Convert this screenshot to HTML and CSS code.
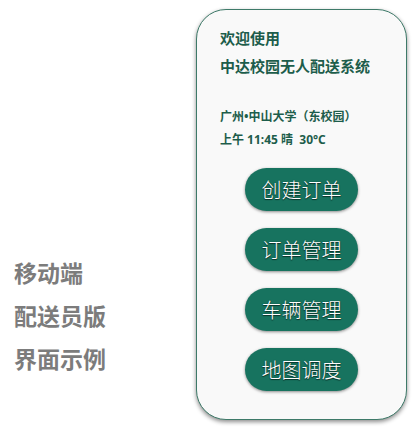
FILE: index.html
```html
<!DOCTYPE html>
<html lang="zh-CN">
<head>
<meta charset="utf-8">
<title>中达校园无人配送系统</title>
<link rel="stylesheet" href="styles.css">
</head>
<body>
<div class="page">
  <div class="caption">
    <div class="caption-line">移动端</div>
    <div class="caption-line">配送员版</div>
    <div class="caption-line">界面示例</div>
  </div>
  <div class="phone">
    <div class="welcome">
      <div class="welcome-line">欢迎使用</div>
      <div class="welcome-line">中达校园无人配送系统</div>
    </div>
    <div class="info">
      <div class="info-line">广州•中山大学（东校园）</div>
      <div class="info-line">上午 11:45 晴&nbsp; 30°C</div>
    </div>
    <div class="menu">
      <div class="btn">创建订单</div>
      <div class="btn">订单管理</div>
      <div class="btn">车辆管理</div>
      <div class="btn">地图调度</div>
    </div>
  </div>
</div>
</body>
</html>
```
FILE: styles.css
```css
html, body {
  margin: 0;
  padding: 0;
  background: #ffffff;
}
body {
  width: 414px;
  height: 429px;
  overflow: hidden;
  font-family: "Noto Sans CJK SC", "Noto Sans", sans-serif;
}
.page {
  display: flex;
  height: 429px;
}
.caption {
  padding-left: 14px;
  padding-top: 251px;
  display: flex;
  flex-direction: column;
}
.caption-line {
  font-size: 23px;
  line-height: 43px;
  font-weight: 700;
  color: #7c7c7c;
}
.phone {
  margin-left: auto;
  margin-right: 7px;
  margin-top: 9px;
  width: 211px;
  height: 411px;
  box-sizing: border-box;
  border: 1.5px solid #3e7a69;
  border-radius: 30px;
  background: #f9f9f9;
  box-shadow: 0 2px 4px rgba(0, 0, 0, 0.45);
  padding: 14px 0 0 23px;
  display: flex;
  flex-direction: column;
}
.welcome-line {
  font-size: 15px;
  line-height: 28px;
  font-weight: 700;
  color: #1d5d4b;
}
.info {
  margin-top: 25px;
}
.info-line {
  font-family: "Noto Sans", "Noto Sans CJK SC", sans-serif;
  font-size: 12px;
  line-height: 23px;
  font-weight: 700;
  color: #1d5d4b;
}
.menu {
  margin-top: 17px;
  margin-left: -23px;
  display: flex;
  flex-direction: column;
  align-items: center;
  gap: 17px;
}
.btn {
  width: 113px;
  height: 43px;
  border-radius: 22px;
  background: #17735f;
  box-shadow: 0 1px 3px rgba(0, 0, 0, 0.45);
  color: #ffffff;
  font-size: 20px;
  font-weight: 300;
  line-height: 43px;
  text-align: center;
  text-shadow: 0 0 1px #0b3a2e, 0 1px 1px rgba(0, 0, 0, 0.6);
}
```
